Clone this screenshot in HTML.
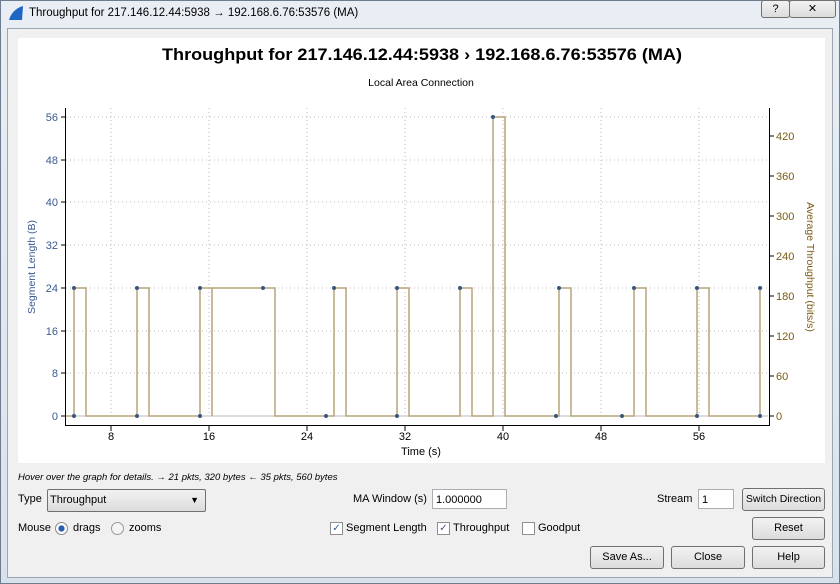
<!DOCTYPE html>
<html><head><meta charset="utf-8"><style>
body{margin:0;width:840px;height:584px;overflow:hidden;font-family:"Liberation Sans",sans-serif;font-size:11px;color:#000;background:#dfe6ee}
.win{position:absolute;left:0;top:0;width:838px;height:582px;border:1px solid #6e7d8e;background:linear-gradient(#e9eef4,#d9e2ec)}
.title{position:absolute;left:28px;top:6px;font-size:11.5px}
.body{position:absolute;left:7px;top:28px;width:824px;height:548px;background:#f0f0f0;border:1px solid #9aa6b2}
.btn{position:absolute;height:21px;border:1px solid #707070;border-radius:3px;background:linear-gradient(#f2f2f2,#dcdcdc);text-align:center;line-height:21px;font-size:11px;white-space:nowrap}
.abs{position:absolute;white-space:nowrap}
.cb{position:absolute;width:11px;height:11px;border:1px solid #8f8f8f;background:#fff;font-size:10px;line-height:11px;text-align:center;color:#3a5a90}
</style></head><body>
<div class="win">
<svg class="abs" style="left:6px;top:4px" width="18" height="16"><path d="M2 15 C4 8 9 3 16 1 L15 15 Z" fill="#1f66c2"/></svg>
<div class="title">Throughput for 217.146.12.44:5938 → 192.168.6.76:53576 (MA)</div>
<div class="btn" style="left:760px;top:-1px;width:27px;height:16px;line-height:16px">?</div>
<div class="btn" style="left:788px;top:-1px;width:45px;height:16px;line-height:16px">✕</div>
</div>
<div class="body"></div>
<svg class="abs" style="left:0;top:0" width="840" height="584" font-family="Liberation Sans, sans-serif">
<rect x="18" y="38" width="807" height="425" fill="#fff"/>
<text x="422" y="60" text-anchor="middle" font-size="17" font-weight="bold" textLength="520" lengthAdjust="spacingAndGlyphs">Throughput for 217.146.12.44:5938   › 192.168.6.76:53576 (MA)</text>
<text x="421" y="86" text-anchor="middle" font-size="10.5">Local Area Connection</text>
<g stroke="#bbb" stroke-dasharray="1,3" stroke-width="1">
<line x1="66" x2="768" y1="117" y2="117"/><line x1="66" x2="768" y1="160" y2="160"/><line x1="66" x2="768" y1="202" y2="202"/><line x1="66" x2="768" y1="245" y2="245"/><line x1="66" x2="768" y1="288" y2="288"/><line x1="66" x2="768" y1="331" y2="331"/><line x1="66" x2="768" y1="373" y2="373"/>
<line x1="111" x2="111" y1="108" y2="416"/><line x1="209" x2="209" y1="108" y2="416"/><line x1="307" x2="307" y1="108" y2="416"/><line x1="405" x2="405" y1="108" y2="416"/><line x1="503" x2="503" y1="108" y2="416"/><line x1="601" x2="601" y1="108" y2="416"/><line x1="699" x2="699" y1="108" y2="416"/>
</g>
<line x1="66" x2="768" y1="416" y2="416" stroke="#bbb"/>
<g stroke="#000"><line x1="65.5" x2="65.5" y1="108" y2="425"/><line x1="769.5" x2="769.5" y1="108" y2="425"/><line x1="65" x2="770" y1="425.5" y2="425.5"/>
<path d="M61 117h4M61 160h4M61 202h4M61 245h4M61 288h4M61 331h4M61 373h4M61 416h4M770 416h4M770 376h4M770 336h4M770 296h4M770 256h4M770 216h4M770 176h4M770 136h4M111 426v5M209 426v5M307 426v5M405 426v5M503 426v5M601 426v5M699 426v5"/></g>
<path d="M66 416H74V288H86V416H137V288H149V416H200V288H212V416M212 416V288H275V416H334V288H346V416H397V288H409V416H460V288H472V416H493V117H505V416H559V288H571V416H634V288H646V416H697V288H709V416H760V288" fill="none" stroke="#b9a47c" stroke-width="1.5"/>
<g fill="#3a5580">
<circle cx="74" cy="288" r="2"/><circle cx="137" cy="288" r="2"/><circle cx="200" cy="288" r="2"/><circle cx="263" cy="288" r="2"/><circle cx="334" cy="288" r="2"/><circle cx="397" cy="288" r="2"/><circle cx="460" cy="288" r="2"/><circle cx="559" cy="288" r="2"/><circle cx="634" cy="288" r="2"/><circle cx="697" cy="288" r="2"/><circle cx="760" cy="288" r="2"/><circle cx="493" cy="117" r="2"/>
<circle cx="74" cy="416" r="2"/><circle cx="137" cy="416" r="2"/><circle cx="200" cy="416" r="2"/><circle cx="326" cy="416" r="2"/><circle cx="397" cy="416" r="2"/><circle cx="556" cy="416" r="2"/><circle cx="622" cy="416" r="2"/><circle cx="697" cy="416" r="2"/><circle cx="760" cy="416" r="2"/>
</g>
<g fill="#3a5a90" font-size="11" text-anchor="end">
<text x="58" y="121">56</text><text x="58" y="164">48</text><text x="58" y="206">40</text><text x="58" y="249">32</text><text x="58" y="292">24</text><text x="58" y="335">16</text><text x="58" y="377">8</text><text x="58" y="420">0</text>
</g>
<g fill="#7a5a10" font-size="11">
<text x="776" y="140">420</text><text x="776" y="180">360</text><text x="776" y="220">300</text><text x="776" y="260">240</text><text x="776" y="300">180</text><text x="776" y="340">120</text><text x="776" y="380">60</text><text x="776" y="420">0</text>
</g>
<g font-size="11" text-anchor="middle"><text x="111" y="440">8</text><text x="209" y="440">16</text><text x="307" y="440">24</text><text x="405" y="440">32</text><text x="503" y="440">40</text><text x="601" y="440">48</text><text x="699" y="440">56</text><text x="421" y="455">Time (s)</text></g>
<text transform="translate(35,267) rotate(-90)" text-anchor="middle" font-size="10.5" fill="#3a5a90">Segment Length (B)</text>
<text transform="translate(807,267) rotate(90)" text-anchor="middle" font-size="10.5" fill="#7a5a10">Average Throughput (bits/s)</text>
<text x="18" y="480" font-size="9.5" font-style="italic">Hover over the graph for details. → 21 pkts, 320 bytes ← 35 pkts, 560 bytes</text>
</svg>
<div class="abs" style="left:18px;top:493px">Type</div>
<div class="btn" style="left:47px;top:489px;width:155px;text-align:left;padding-left:2px;border-radius:2px">Throughput<span style="position:absolute;right:6px;font-size:9px">▼</span></div>
<div class="abs" style="left:353px;top:493px">MA Window (s)</div>
<div class="abs" style="left:432px;top:489px;width:75px;height:20px;border:1px solid #abadb3;background:#fff;line-height:20px;padding-left:3px;box-sizing:border-box">1.000000</div>
<div class="abs" style="left:657px;top:493px">Stream</div>
<div class="abs" style="left:698px;top:489px;width:36px;height:20px;border:1px solid #abadb3;background:#fff;line-height:20px;padding-left:3px;box-sizing:border-box">1</div>
<div class="btn" style="left:742px;top:488px;width:81px;font-size:10.5px">Switch Direction</div>
<div class="abs" style="left:18px;top:522px">Mouse</div>
<div class="abs" style="left:55px;top:522px;width:11px;height:11px;border:1px solid #888;border-radius:50%;background:radial-gradient(#2a5fb0 35%,#fff 45%)"></div>
<div class="abs" style="left:73px;top:522px">drags</div>
<div class="abs" style="left:111px;top:522px;width:11px;height:11px;border:1px solid #999;border-radius:50%;background:#f4f4f4"></div>
<div class="abs" style="left:129px;top:522px">zooms</div>
<div class="cb" style="left:330px;top:522px">✓</div><div class="abs" style="left:346px;top:522px">Segment Length</div>
<div class="cb" style="left:437px;top:522px">✓</div><div class="abs" style="left:453px;top:522px">Throughput</div>
<div class="cb" style="left:522px;top:522px"></div><div class="abs" style="left:538px;top:522px">Goodput</div>
<div class="btn" style="left:752px;top:517px;width:71px">Reset</div>
<div class="btn" style="left:590px;top:546px;width:72px">Save As...</div>
<div class="btn" style="left:671px;top:546px;width:72px">Close</div>
<div class="btn" style="left:752px;top:546px;width:71px">Help</div>
</body></html>
